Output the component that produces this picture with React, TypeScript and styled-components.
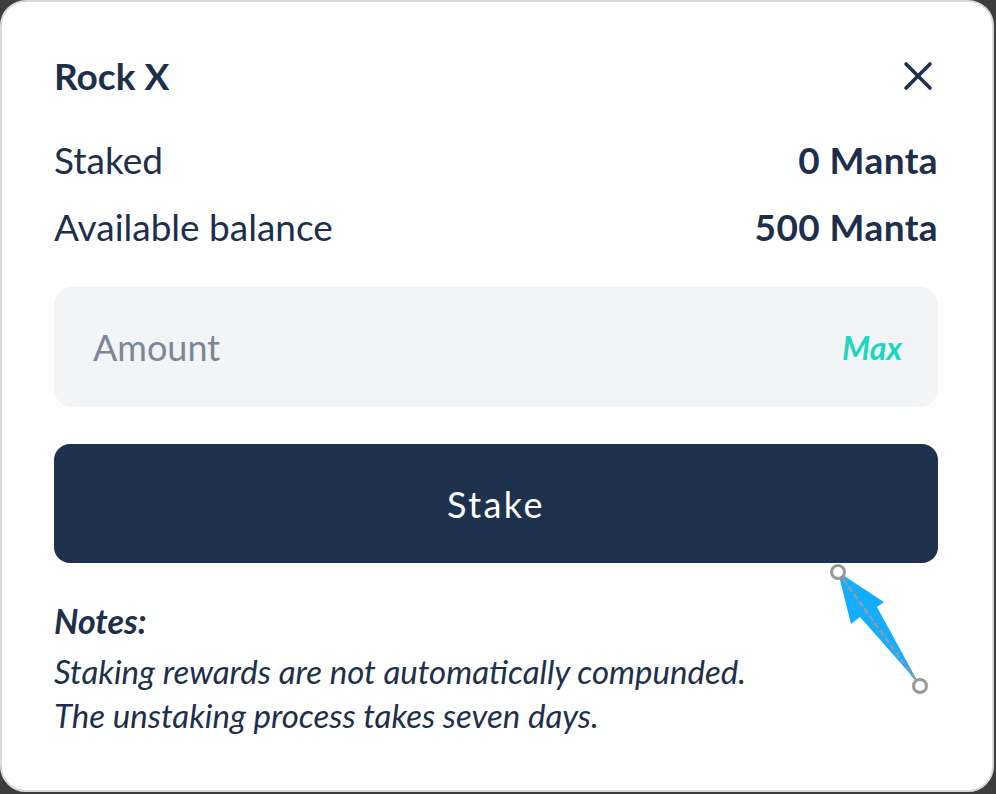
import React from "react";
import styled, { createGlobalStyle } from "styled-components";

const Global = createGlobalStyle`
  html, body { margin: 0; padding: 0; background: #3d3d3d; }
  body { font-family: "Lato", "Noto Sans", sans-serif; color: #1e2f4b; }
  * { box-sizing: border-box; }
`;

const Modal = styled.div`
  position: relative;
  width: 994px;
  height: 792px;
  background: #ffffff;
  border: 2px solid #d9dadf;
  border-radius: 26px;
  padding: 50px 54px 0 52px;
  display: flex;
  flex-direction: column;
`;

const Header = styled.div`
  display: flex;
  align-items: center;
  justify-content: space-between;
  height: 48px;
  margin-bottom: 36px;
`;

const Title = styled.h1`
  margin: 0;
  font-size: 37px;
  font-weight: 700;
  line-height: 48px;
  color: #1e2f4b;
`;

const CloseButton = styled.button`
  border: none;
  background: transparent;
  padding: 0;
  width: 32px;
  height: 32px;
  display: flex;
  align-items: center;
  justify-content: center;
  margin-right: 4px;
  cursor: pointer;
`;

const InfoRow = styled.div`
  display: flex;
  justify-content: space-between;
  align-items: center;
  height: 48px;
  margin-bottom: 19px;
  font-size: 37px;
  line-height: 48px;
`;

const Label = styled.span`
  font-weight: 400;
`;

const Value = styled.span`
  font-weight: 700;
  letter-spacing: 0.4px;
`;

const AmountField = styled.div`
  margin-top: 17px;
  height: 120px;
  border-radius: 18px;
  background: #f3f4f6;
  display: flex;
  align-items: center;
  justify-content: space-between;
  padding: 0 36px 0 37px;
`;

const AmountInput = styled.input`
  border: none;
  background: transparent;
  outline: none;
  font-family: inherit;
  font-size: 36px;
  color: #1e2f4b;
  flex: 1;
  &::placeholder { color: #7b8799; }
`;

const MaxButton = styled.button`
  border: none;
  background: transparent;
  padding: 0;
  font-family: inherit;
  font-style: italic;
  font-weight: 700;
  font-size: 32px;
  color: #1fd6c3;
  cursor: pointer;
`;

const StakeButton = styled.button`
  margin-top: 37px;
  height: 119px;
  border: none;
  border-radius: 16px;
  background: #1f324d;
  color: #ffffff;
  font-family: inherit;
  font-size: 36px;
  font-weight: 400;
  letter-spacing: 2.4px;
  cursor: pointer;
`;

const Notes = styled.div`
  margin-top: 38px;
  font-style: italic;
  color: #1e2f4b;
`;

const NotesTitle = styled.div`
  font-weight: 700;
  font-size: 34px;
  line-height: 40px;
  margin-bottom: 8px;
`;

const NoteLine = styled.div`
  font-size: 33px;
  line-height: 44px;
`;

const Annotation = styled.svg`
  position: absolute;
  left: -2px;
  top: -2px;
  width: 996px;
  height: 794px;
  pointer-events: none;
`;

export default function App() {
  return (
    <>
      <Global />
      <Modal>
        <Header>
          <Title>Rock X</Title>
          <CloseButton aria-label="Close">
            <svg width="30" height="30" viewBox="0 0 30 30">
              <path d="M3 3 L27 27 M27 3 L3 27" stroke="#1e2f4b" strokeWidth="3.6" strokeLinecap="round" />
            </svg>
          </CloseButton>
        </Header>
        <InfoRow>
          <Label>Staked</Label>
          <Value>0 Manta</Value>
        </InfoRow>
        <InfoRow>
          <Label>Available balance</Label>
          <Value>500 Manta</Value>
        </InfoRow>
        <AmountField>
          <AmountInput placeholder="Amount" />
          <MaxButton>Max</MaxButton>
        </AmountField>
        <StakeButton>Stake</StakeButton>
        <Notes>
          <NotesTitle>Notes:</NotesTitle>
          <NoteLine>Staking rewards are not automatically compunded.</NoteLine>
          <NoteLine>The unstaking process takes seven days.</NoteLine>
        </Notes>
        <Annotation viewBox="0 0 996 794">
          <polygon points="838,572 884,602 877,607 919,684 860,617 851,624" fill="#14adff" />
          <line x1="838" y1="572" x2="920" y2="686" stroke="#9a9a9a" strokeWidth="2.4" strokeDasharray="6 3" />
          <circle cx="838" cy="572" r="6.5" fill="#ffffff" stroke="#999999" strokeWidth="3" />
          <circle cx="920" cy="686" r="6.5" fill="#ffffff" stroke="#999999" strokeWidth="3" />
        </Annotation>
      </Modal>
    </>
  );
}
